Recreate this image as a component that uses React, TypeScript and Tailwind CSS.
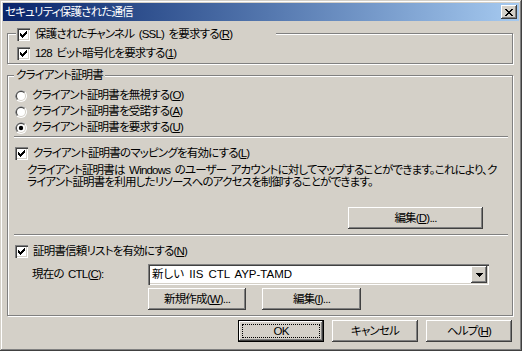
import type { ReactNode } from "react"

function Check() {
  return (
    <span className="flex h-[13px] w-[13px] shrink-0 items-center justify-center bg-white shadow-[inset_1px_1px_0_#808080,inset_2px_2px_0_#404040,inset_-1px_-1px_0_#fff,inset_-2px_-2px_0_#d4d0c8]">
      <svg width="7" height="7" viewBox="0 0 7 7" shapeRendering="crispEdges">
        {[2, 3, 4, 3, 2, 1, 0].map((y, x) => (
          <rect key={x} x={x} y={y} width="1" height="3" fill="#000" />
        ))}
      </svg>
    </span>
  )
}

function Radio({ checked = false }: { checked?: boolean }) {
  return (
    <svg width="12" height="12" viewBox="0 0 12 12" className="shrink-0">
      <circle cx="6" cy="6" r="6" fill="#fff" />
      <path d="M1.76 10.24 A6 6 0 0 1 10.24 1.76 L6 6 Z" fill="#808080" />
      <circle cx="6" cy="6" r="5" fill="#d4d0c8" />
      <path d="M2.46 9.54 A5 5 0 0 1 9.54 2.46 L6 6 Z" fill="#404040" />
      <circle cx="6" cy="6" r="4" fill="#fff" />
      {checked && <circle cx="6" cy="6" r="2.2" fill="#000" />}
    </svg>
  )
}

function Button({ className = "", children }: { className?: string; children: ReactNode }) {
  return (
    <div
      className={`flex h-[22px] shrink-0 items-center justify-center bg-[#d4d0c8] leading-[13px] shadow-[inset_-1px_-1px_0_#404040,inset_1px_1px_0_#fff,inset_-2px_-2px_0_#808080] ${className}`}
    >
      {children}
    </div>
  )
}

function Separator({ className = "" }: { className?: string }) {
  return <div className={`ml-[6px] h-[2px] w-[494px] border-t border-b border-t-[#808080] border-b-white ${className}`} />
}

function Row({ children, className = "" }: { children: ReactNode; className?: string }) {
  return <div className={`flex h-[13px] items-center gap-[5px] leading-[13px] ${className}`}>{children}</div>
}

export default function App() {
  return (
    <div className="flex h-[351px] w-[522px] flex-col overflow-hidden bg-[#d4d0c8] p-[3px] font-['Liberation_Sans','Noto_Sans_CJK_JP',sans-serif] text-[11.5px] tracking-[-0.8px] text-black [word-spacing:2px] [font-feature-settings:'palt'] shadow-[inset_-1px_-1px_0_#404040,inset_1px_1px_0_#d4d0c8,inset_-2px_-2px_0_#808080,inset_2px_2px_0_#fff]">
      {/* title bar */}
      <div className="flex h-[18px] shrink-0 items-center justify-between bg-linear-to-r from-[#0a246a] to-[#a6caf0] pl-[2px] pr-[2px]">
        <span className="leading-[14px] text-white">セキュリティ保護された通信</span>
        <div className="flex h-[14px] w-[16px] items-center justify-center bg-[#d4d0c8] shadow-[inset_-1px_-1px_0_#404040,inset_1px_1px_0_#fff,inset_-2px_-2px_0_#808080]">
          <svg width="8" height="7" viewBox="0 0 8 7" shapeRendering="crispEdges">
            <path
              d="M0 0h2v1H0zM6 0h2v1H6zM1 1h2v1H1zM5 1h2v1H5zM2 2h4v1H2zM3 3h2v1H3zM2 4h4v1H2zM1 5h2v1H1zM5 5h2v1H5zM0 6h2v1H0zM6 6h2v1H6z"
              fill="#000"
            />
          </svg>
        </div>
      </div>

      <div className="flex flex-col pl-[4px]">
        {/* SSL group */}
        <div className="mt-[12px] h-[31px] w-[506px] border border-[#808080] shadow-[1px_1px_0_#fff,inset_1px_1px_0_#fff]">
          <div className="-mt-[6px] flex flex-col gap-[6px] pl-[8px]">
            <Row className="w-[260px] bg-[#d4d0c8] pl-[1px]">
              <Check />
              <span>
                保護されたチャンネル (SSL) を要求する(<u>R</u>)
              </span>
            </Row>
            <Row className="pl-[1px]">
              <Check />
              <span>
                128 ビット暗号化を要求する(<u>1</u>)
              </span>
            </Row>
          </div>
        </div>

        {/* client certificate group */}
        <div className="mt-[11px] flex h-[241px] w-[506px] flex-col border border-[#808080] shadow-[1px_1px_0_#fff,inset_1px_1px_0_#fff]">
          <div className="-mt-[7px] ml-[6px] h-[13px] w-fit bg-[#d4d0c8] px-[2px] leading-[13px]">クライアント証明書</div>

          <div className="mt-[7px] ml-[7px] flex flex-col gap-[3px]">
            <Row>
              <Radio />
              <span>
                クライアント証明書を無視する(<u>O</u>)
              </span>
            </Row>
            <Row>
              <Radio />
              <span>
                クライアント証明書を受諾する(<u>A</u>)
              </span>
            </Row>
            <Row>
              <Radio checked />
              <span>
                クライアント証明書を要求する(<u>U</u>)
              </span>
            </Row>
          </div>

          <Separator className="mt-[2px]" />

          <Row className="mt-[9px] ml-[7px]">
            <Check />
            <span>
              クライアント証明書のマッピングを有効にする(<u>L</u>)
            </span>
          </Row>
          <p className="mt-[4px] ml-[19px] whitespace-nowrap leading-[12px]">
            クライアント証明書は Windows のユーザー アカウントに対してマップすることができます。これにより、ク
            <br />
            ライアント証明書を利用したリソースへのアクセスを制御することができます。
          </p>

          <Button className="mt-[19px] ml-[340px] w-[135px]">
            編集(<u>D</u>)...
          </Button>

          <Separator className="mt-[5px]" />

          <Row className="mt-[9px] ml-[7px]">
            <Check />
            <span>
              証明書信頼リストを有効にする(<u>N</u>)
            </span>
          </Row>

          <div className="mt-[6px] ml-[24px] flex items-center">
            <span className="w-[116px] leading-[13px]">
              現在の CTL(<u>C</u>):
            </span>
            <div className="flex h-[21px] w-[341px] items-center justify-between bg-white pl-[4px] pr-[2px] shadow-[inset_1px_1px_0_#808080,inset_2px_2px_0_#404040,inset_-1px_-1px_0_#fff,inset_-2px_-2px_0_#d4d0c8]">
              <span className="leading-[13px] tracking-normal">新しい IIS CTL AYP-TAMD</span>
              <div className="flex h-[17px] w-[16px] items-center justify-center bg-[#d4d0c8] shadow-[inset_-1px_-1px_0_#404040,inset_1px_1px_0_#fff,inset_-2px_-2px_0_#808080]">
                <svg width="7" height="4" viewBox="0 0 7 4" shapeRendering="crispEdges">
                  <path d="M0 0h7v1H0zM1 1h5v1H1zM2 2h3v1H2zM3 3h1v1H3z" fill="#000" />
                </svg>
              </div>
            </div>
          </div>

          <div className="mt-[3px] ml-[140px] flex gap-[16px]">
            <Button className="w-[98px]">
              新規作成(<u>W</u>)...
            </Button>
            <Button className="w-[99px]">
              編集(<u>I</u>)...
            </Button>
          </div>
        </div>

        {/* dialog buttons */}
        <div className="mt-[4px] ml-[231px] flex gap-[8px]">
          <div className="flex h-[22px] w-[86px] border border-black bg-[#d4d0c8] p-[3px] shadow-[inset_-1px_-1px_0_#404040,inset_1px_1px_0_#fff,inset_-2px_-2px_0_#808080]">
            <div className="flex flex-1 items-center justify-center border border-dotted border-black leading-[13px]">OK</div>
          </div>
          <Button className="w-[86px]">キャンセル</Button>
          <Button className="w-[86px]">
            ヘルプ(<u>H</u>)
          </Button>
        </div>
      </div>
    </div>
  )
}
